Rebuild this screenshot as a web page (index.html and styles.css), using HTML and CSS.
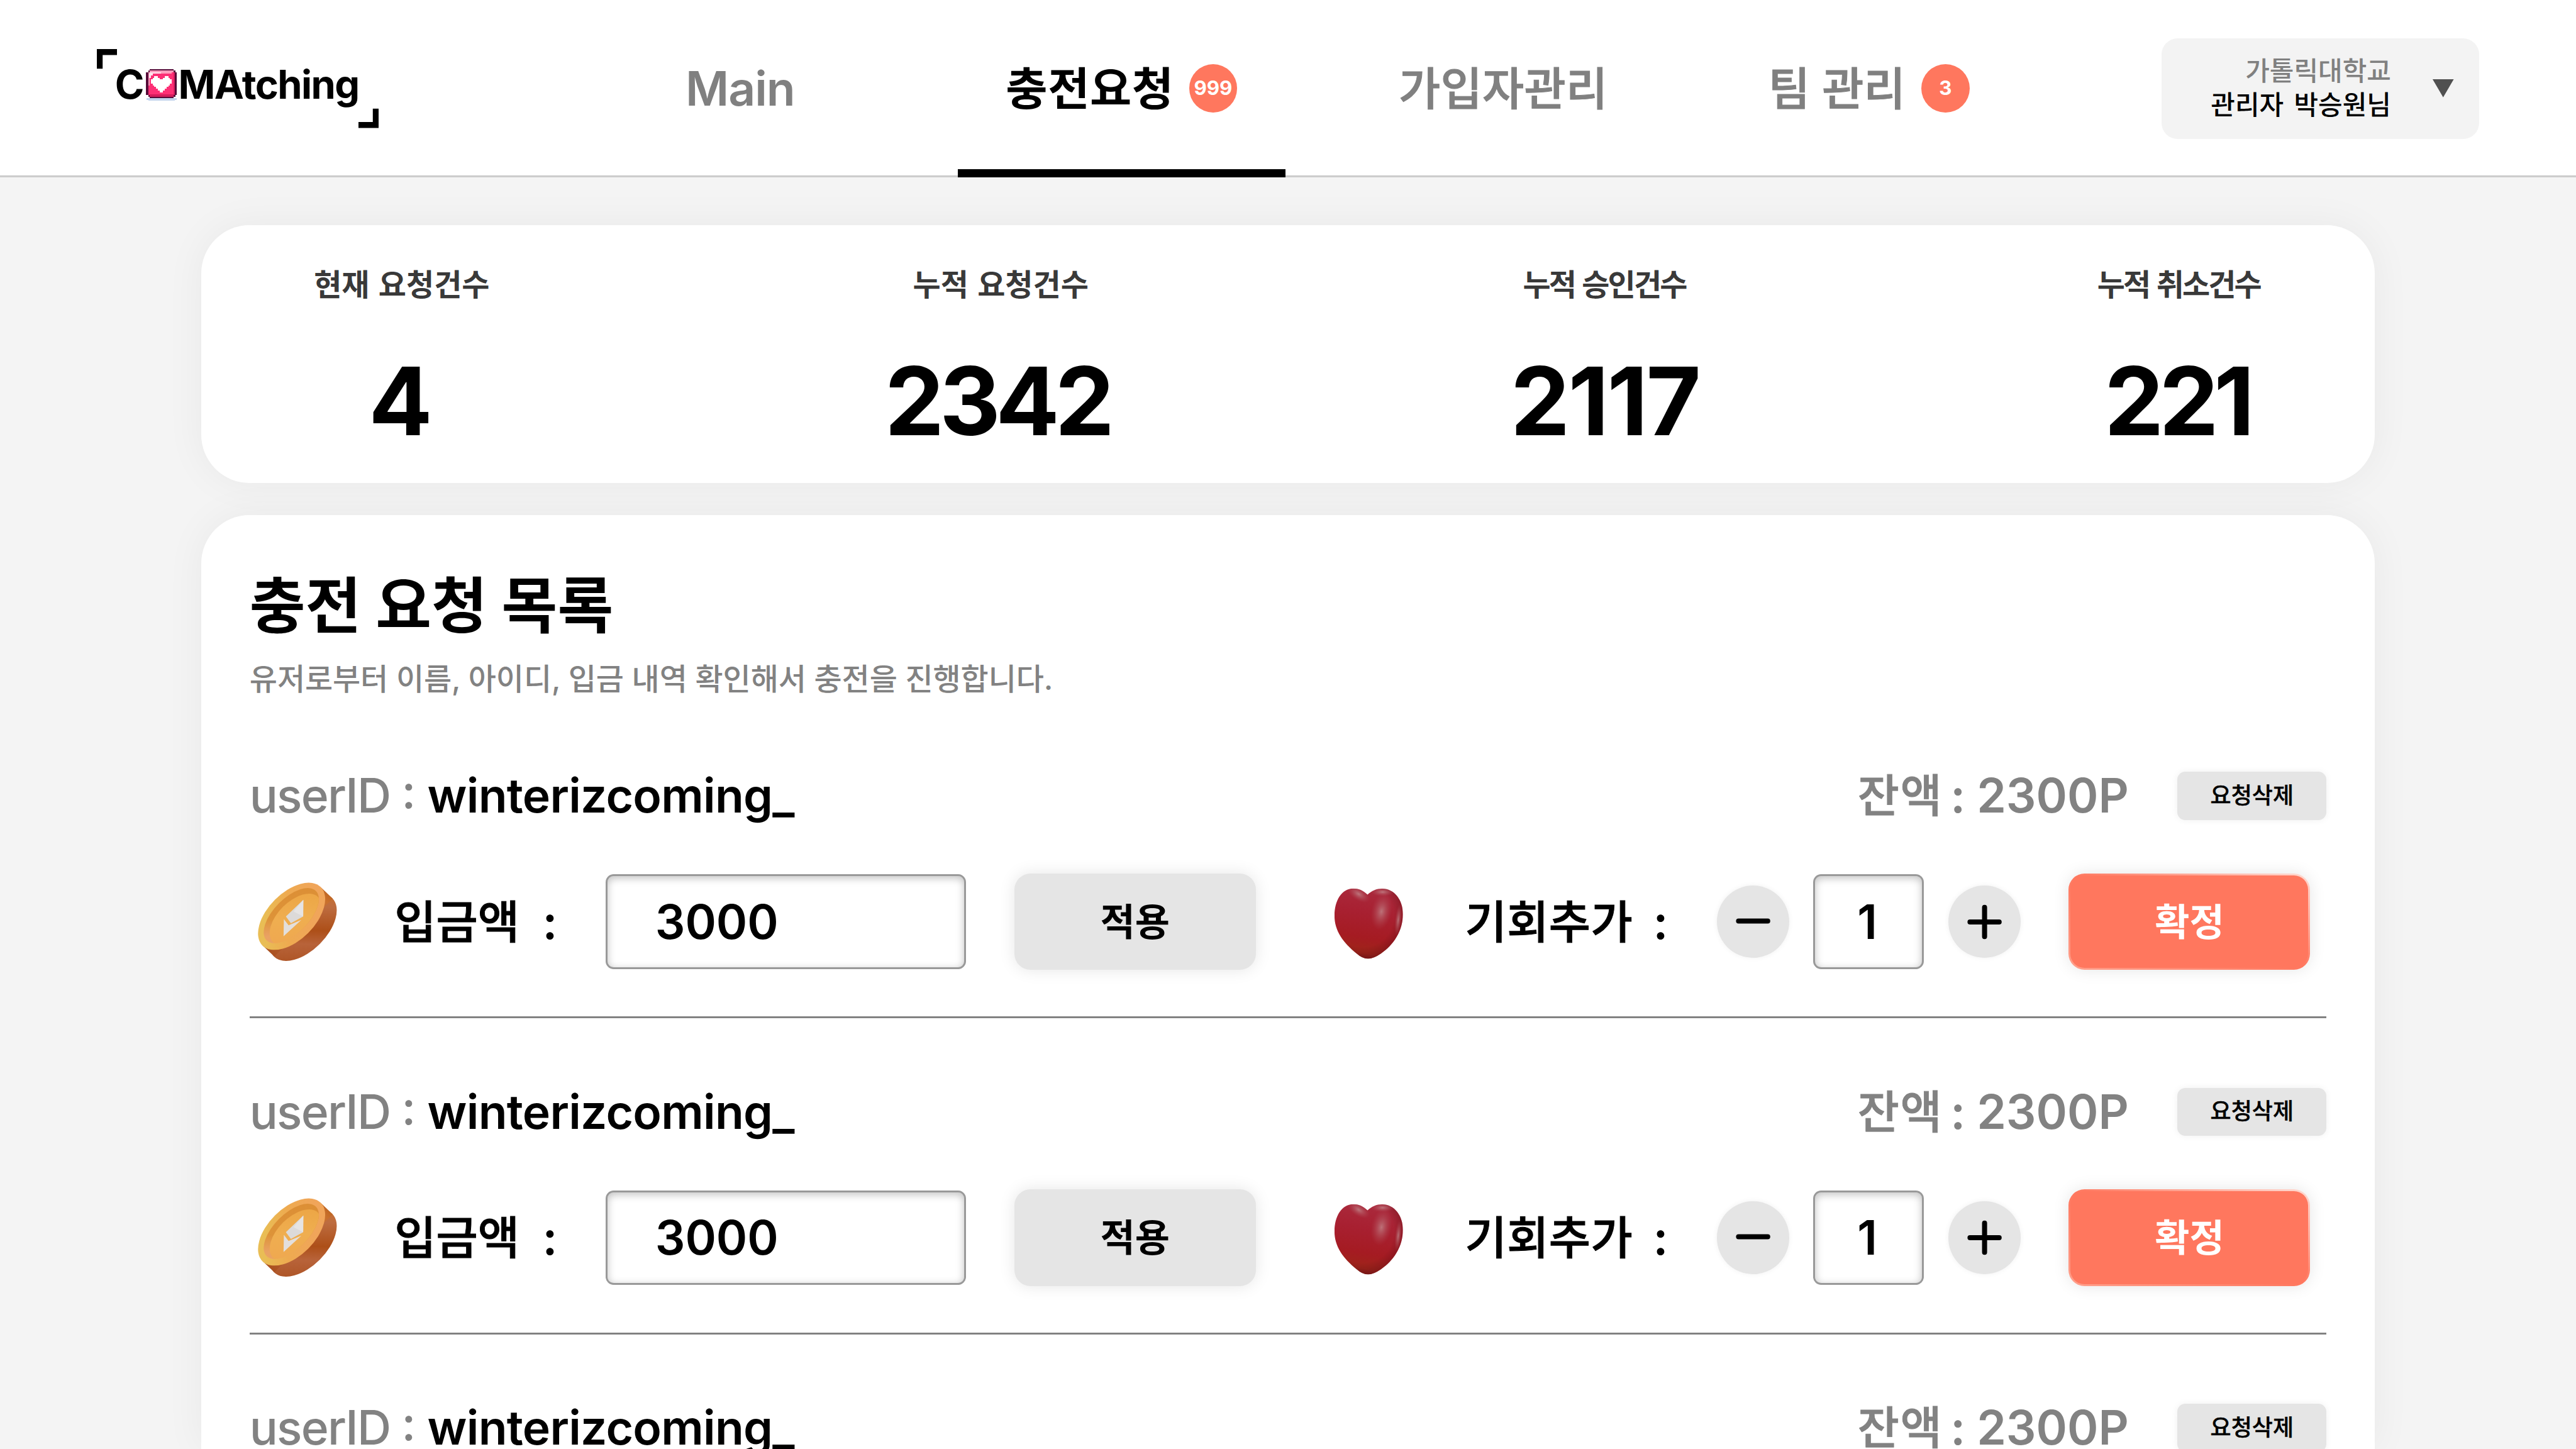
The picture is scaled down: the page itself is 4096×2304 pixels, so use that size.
FILE: index.html
```
<!DOCTYPE html>
<html lang="ko">
<head>
<meta charset="utf-8">
<title>COMAtching 관리자</title>
<link rel="stylesheet" href="styles.css">
</head>
<body>
<svg class="sprites" aria-hidden="true">
  <defs>
    <linearGradient id="coin-side" gradientUnits="userSpaceOnUse" x1="140" y1="500" x2="520" y2="130">
      <stop offset="0" stop-color="#a94f1d"/><stop offset=".3" stop-color="#b8633a"/><stop offset=".45" stop-color="#ad4f18"/>
      <stop offset=".72" stop-color="#bd6c40"/><stop offset=".88" stop-color="#c9702c"/><stop offset="1" stop-color="#b8601f"/>
    </linearGradient>
    <linearGradient id="coin-rim" gradientUnits="userSpaceOnUse" x1="150" y1="160" x2="370" y2="370">
      <stop offset="0" stop-color="#e9bd55"/><stop offset=".45" stop-color="#eeaa50"/><stop offset="1" stop-color="#f0a55a"/>
    </linearGradient>
    <linearGradient id="coin-wall" gradientUnits="userSpaceOnUse" x1="120" y1="400" x2="400" y2="110">
      <stop offset="0" stop-color="#eca35f"/><stop offset=".2" stop-color="#e9a263"/><stop offset=".45" stop-color="#dd9338"/><stop offset="1" stop-color="#dc8e35"/>
    </linearGradient>
    <linearGradient id="coin-floor" gradientUnits="userSpaceOnUse" x1="170" y1="400" x2="400" y2="150">
      <stop offset="0" stop-color="#efa750"/><stop offset=".5" stop-color="#efae50"/><stop offset="1" stop-color="#eca544"/>
    </linearGradient>
    <clipPath id="coin-recess"><ellipse cx="266" cy="263" rx="208" ry="104" transform="rotate(-45 266 263)"/></clipPath>
    <linearGradient id="heart-body" gradientUnits="userSpaceOnUse" x1="300" y1="77" x2="235" y2="496">
      <stop offset="0" stop-color="#aa2a3d"/><stop offset=".35" stop-color="#a82031"/><stop offset=".7" stop-color="#a51b22"/><stop offset=".92" stop-color="#9e2519"/><stop offset="1" stop-color="#7c1c14"/>
    </linearGradient>
    <radialGradient id="heart-edge" gradientUnits="userSpaceOnUse" cx="235" cy="240" r="260">
      <stop offset=".72" stop-color="#701018" stop-opacity="0"/><stop offset="1" stop-color="#701018" stop-opacity=".6"/>
    </radialGradient>
    <radialGradient id="heart-glow">
      <stop offset="0" stop-color="#c9a3a3" stop-opacity=".62"/><stop offset="1" stop-color="#b05560" stop-opacity="0"/>
    </radialGradient>
    <clipPath id="heart-clip"><path d="M265 114C240 88 210 77 180 77C110 77 68 150 68 240C68 330 120 400 200 465Q235 496 268 496Q300 496 345 465C420 415 476 330 476 230C476 145 425 78 352 78C318 78 290 90 265 114Z"/></clipPath>
  </defs>
  <symbol id="coin" viewBox="18 12 576 576">
    <g fill="url(#coin-side)">
      <ellipse cx="337" cy="333" rx="246" ry="140" transform="rotate(-45 337 333)"/>
      <path d="M444 95L513 161L165 507L96 441Z"/>
    </g>
    <ellipse cx="268" cy="267" rx="246" ry="140" transform="rotate(-45 268 267)" fill="url(#coin-rim)"/>
    <ellipse cx="266" cy="263" rx="208" ry="104" transform="rotate(-45 266 263)" fill="url(#coin-wall)"/>
    <g clip-path="url(#coin-recess)">
      <ellipse cx="291" cy="286" rx="190" ry="106" transform="rotate(-45 291 286)" fill="url(#coin-floor)"/>
    </g>
    <path d="M338 169L337 268L264 308L234 268Z" fill="#dcdad9"/>
    <path d="M338 169L337 268L280 238Z" fill="#e6e4e3"/>
    <path d="M222 284L250 320L326 289L220 386Z" fill="#e3dfdc"/>
  </symbol>
  <symbol id="heart" viewBox="-18 -12 576 576">
    <g clip-path="url(#heart-clip)">
      <rect x="60" y="70" width="425" height="430" fill="url(#heart-body)"/>
      <rect x="60" y="70" width="425" height="430" fill="url(#heart-edge)"/>
      <ellipse cx="212" cy="110" rx="75" ry="38" transform="rotate(32 212 110)" fill="url(#heart-glow)"/>
      <ellipse cx="355" cy="98" rx="70" ry="26" fill="url(#heart-glow)"/>
      <ellipse cx="348" cy="215" rx="62" ry="110" transform="rotate(10 348 215)" fill="url(#heart-glow)"/>
      <ellipse cx="448" cy="265" rx="20" ry="95" transform="rotate(6 448 265)" fill="url(#heart-glow)"/>
    </g>
  </symbol>
</svg>

<header class="topbar">
  <svg class="logo" viewBox="0 0 560 157" role="img" aria-label="COMAtching">
    <path d="M0 0H40V12H11.500V39H0ZM560 157H520V145H548.500V118.500H560Z"/>
    <text class="logo-text" x="36" y="98.300">C</text>
    <g transform="translate(-32 -38) scale(.40816 .33333)" shape-rendering="crispEdges">
      <path fill="#c3d5ec" d="M320 408H467V417H457V423H328V417H320Z"/>
      <path fill="#560a38" d="M337 233H451V242H460V251H467V389H460V399H451V408H337V399H328V389H318V251H328V242H337Z"/>
      <path fill="#fd2f75" d="M337 242H451V251H458V389H451V399H337V389H328V251H337Z"/>
      <path fill="#d51c5c" d="M337 385H451V251H458V389H451V399H337Z"/>
      <path fill="#ff9dbd" d="M337 242H451V251H443V260H350V270H337V330H328V251H337Z"/>
      <path fill="#ffe3ec" d="M337 251H390V260H350V270H343V285H333V260H337Z"/>
      <path fill="#fff" d="M358 276H374V285H384V294H400V285H410V276H426V285H434V294H442V320H434V330H426V340H418V350H410V362H400V374H386V362H376V350H366V340H358V330H350V320H343V294H350V285H358Z"/>
    </g>
    <text class="logo-text" x="162" y="98.300">MAtching</text>
  </svg>

  <nav class="tabs">
    <a class="tab tab-main latin">Main</a>
    <a class="tab tab-active">충전요청<span class="badge">999</span></a>
    <a class="tab tab-members">가입자관리</a>
    <a class="tab tab-team">팀 관리<span class="badge">3</span></a>
  </nav>

  <div class="profile">
    <div class="profile-text">
      <span class="profile-school">가톨릭대학교</span>
      <span class="profile-name">관리자 박승원님</span>
    </div>
    <svg class="caret" viewBox="0 0 42 36"><path d="M0 0H42L21 36Z"/></svg>
  </div>
</header>

<main class="page">
  <section class="card stats">
    <div class="stat"><span class="stat-label">현재 요청건수</span><span class="stat-value">4</span></div>
    <div class="stat"><span class="stat-label">누적 요청건수</span><span class="stat-value">2342</span></div>
    <div class="stat"><span class="stat-label tight">누적 승인건수</span><span class="stat-value ones">2117</span></div>
    <div class="stat"><span class="stat-label tight">누적 취소건수</span><span class="stat-value">221</span></div>
  </section>

  <section class="card requests">
    <h1 class="title">충전 요청 목록</h1>
    <p class="subtitle">유저로부터 이름, 아이디, 입금 내역 확인해서 충전을 진행합니다.</p>

    <article class="request">
      <div class="user-line">
        <span class="user-key">userID <span class="raised">:</span></span><span class="user-name">winterizcoming_</span>
        <span class="balance-key">잔액</span><span class="balance-colon">:</span><span class="balance">2300P</span>
        <button class="btn btn-delete">요청삭제</button>
      </div>
      <div class="controls">
        <svg class="icon"><use href="#coin"/></svg>
        <div class="field-label deposit"><span>입금액</span><span class="colon">:</span></div>
        <div class="input amount">3000</div>
        <button class="btn btn-apply">적용</button>
        <svg class="icon icon-heart"><use href="#heart"/></svg>
        <div class="field-label chance"><span>기회추가</span><span class="colon">:</span></div>
        <div class="stepper">
          <button class="round"><svg viewBox="0 0 144 144"><path d="M43 70.500H101"/></svg></button>
          <div class="input count">1</div>
          <button class="round"><svg viewBox="0 0 144 144"><path d="M43 72.500H101M72 43.500V101.500"/></svg></button>
        </div>
        <button class="btn btn-confirm">확정</button>
      </div>
    </article>

    <article class="request">
      <div class="user-line">
        <span class="user-key">userID <span class="raised">:</span></span><span class="user-name">winterizcoming_</span>
        <span class="balance-key">잔액</span><span class="balance-colon">:</span><span class="balance">2300P</span>
        <button class="btn btn-delete">요청삭제</button>
      </div>
      <div class="controls">
        <svg class="icon"><use href="#coin"/></svg>
        <div class="field-label deposit"><span>입금액</span><span class="colon">:</span></div>
        <div class="input amount">3000</div>
        <button class="btn btn-apply">적용</button>
        <svg class="icon icon-heart"><use href="#heart"/></svg>
        <div class="field-label chance"><span>기회추가</span><span class="colon">:</span></div>
        <div class="stepper">
          <button class="round"><svg viewBox="0 0 144 144"><path d="M43 70.500H101"/></svg></button>
          <div class="input count">1</div>
          <button class="round"><svg viewBox="0 0 144 144"><path d="M43 72.500H101M72 43.500V101.500"/></svg></button>
        </div>
        <button class="btn btn-confirm">확정</button>
      </div>
    </article>

    <article class="request">
      <div class="user-line">
        <span class="user-key">userID <span class="raised">:</span></span><span class="user-name">winterizcoming_</span>
        <span class="balance-key">잔액</span><span class="balance-colon">:</span><span class="balance">2300P</span>
        <button class="btn btn-delete">요청삭제</button>
      </div>
    </article>
  </section>
</main>
</body>
</html>
```
FILE: styles.css
```
* { box-sizing: border-box; }

body {
  display: flex;
  flex-direction: column;
  margin: 0;
  height: 2304px;
  overflow: hidden;
  background: #f4f4f4;
  color: #000;
  font-family: Inter, "Noto Sans CJK KR", sans-serif;
  line-height: 1.2;
}

button {
  margin: 0;
  padding: 0;
  border: 0;
  font: inherit;
  color: inherit;
}

.sprites { position: absolute; width: 0; height: 0; }

/* Top bar */
.topbar {
  display: flex;
  flex: none;
  align-items: center;
  height: 281.6px;
  padding: 0 153.6px;
  background: #fff;
  box-shadow: inset 0 -3.2px #cdcdcd;
}
.logo { width: 448px; height: 125.6px; overflow: visible; }
.logo-text { font-size: 79px; font-weight: 700; letter-spacing: -2px; }

.tabs {
  display: flex;
  align-self: stretch;
  gap: 103px;
  margin-left: 411.6px;
}
.tab {
  position: relative;
  display: flex;
  align-items: center;
  justify-content: space-between;
  padding: 0 76.8px;
  font-size: 72px;
  font-weight: 500;
  -webkit-text-stroke: 1px currentColor;
  color: #808080;
  white-space: nowrap;
}
.latin { font-size: 75px; font-weight: 600; letter-spacing: -1px; -webkit-text-stroke: 0; }
.tab-main { margin-right: 79px; }
.tab-members { width: 484.8px; letter-spacing: .3px; }
.tab-team { width: 473.6px; }
.tab-active {
  width: 521.6px;
  color: #000;
  font-weight: 700;
  letter-spacing: .6px;
  -webkit-text-stroke: 0;
}
.tab-active::after {
  content: "";
  position: absolute;
  left: 0;
  right: 0;
  bottom: 0;
  height: 12.8px;
  background: #000;
}
.badge {
  display: grid;
  place-items: center;
  width: 76.8px;
  height: 76.8px;
  border-radius: 50%;
  background: #ff775e;
  color: #fff;
  font-size: 31.3px;
  font-weight: 650;
  letter-spacing: 0;
  -webkit-text-stroke: 0;
}

.profile {
  display: flex;
  align-items: center;
  justify-content: flex-end;
  gap: 66px;
  width: 505.6px;
  height: 160px;
  margin-left: auto;
  padding: 0 40.8px 0 0;
  border-radius: 25.6px;
  background: #f3f3f3;
}
.profile-text {
  display: flex;
  flex-direction: column;
  align-items: flex-end;
  padding-bottom: 1px;
  font-size: 42px;
  font-weight: 500;
  line-height: 54.8px;
}
.profile-school { color: #808080; }
.profile-name { word-spacing: 5px; }
.caret { width: 33.6px; height: 28.8px; fill: #505050; }

/* Cards */
.page {
  display: flex;
  flex: 1;
  flex-direction: column;
  gap: 51.2px;
  min-height: 0;
  padding: 76.8px 320px 0;
}
.card {
  border-radius: 76.8px;
  background: #fff;
  box-shadow: 0 0 64px rgba(0, 0, 0, .05);
}

.stats {
  display: flex;
  flex: none;
  justify-content: space-between;
  height: 409.6px;
  padding: 64px 179.2px 0;
}
.stat {
  display: flex;
  flex-direction: column;
  align-items: center;
  gap: 62.5px;
}
.stat-label {
  color: #393939;
  font-size: 48px;
  font-weight: 700;
  line-height: 61px;
  word-spacing: 3px;
}
.stat-label.tight { margin: 0 3px 0 -3px; letter-spacing: -2.9px; }
.stat-value {
  margin: 0 5.5px 0 -5.5px;
  font-size: 150.2px;
  font-weight: 700;
  line-height: 182px;
  letter-spacing: -7.5px;
}
.stat-value.ones { margin: 0 2px 0 -2px; letter-spacing: -2.8px; }

/* Request list */
.requests {
  flex: 1;
  min-height: 0;
  padding: 83px 76.8px 0;
  border-radius: 76.8px 76.8px 0 0;
}
.title {
  margin: 0;
  font-size: 96.5px;
  font-weight: 700;
  line-height: 122.9px;
}
.subtitle {
  margin: 24.5px 0 7.2px;
  color: #828282;
  font-size: 48px;
  font-weight: 500;
  line-height: 60px;
  letter-spacing: -.08px;
}
.request {
  height: 502.4px;
  padding-top: 110.4px;
  border-bottom: 3px solid #828282;
}
.user-line {
  display: flex;
  align-items: center;
  height: 76.8px;
  font-size: 75px;
  line-height: 76.8px;
}
.user-key {
  width: 282.8px;
  color: #828282;
  font-weight: 500;
  letter-spacing: -1.8px;
  white-space: nowrap;
}
.raised { position: relative; top: -7px; }
.user-name { font-weight: 600; letter-spacing: -.75px; }
.balance-key {
  margin: 0 12px 0 auto;
  color: #828282;
  font-size: 72px;
  font-weight: 500;
  letter-spacing: 1.5px;
  -webkit-text-stroke: .8px currentColor;
}
.balance-colon { margin-right: 18px; color: #828282; font-weight: 600; }
.balance { margin-right: 77.5px; color: #828282; font-weight: 600; }

.btn {
  display: grid;
  place-items: center;
  background: #e5e5e5;
  font-weight: 700;
  line-height: 1.2;
}
.btn-delete {
  width: 236.8px;
  height: 76.8px;
  border-radius: 12.8px;
  box-shadow: 0 0 12px rgba(0, 0, 0, .06);
  font-size: 36px;
  font-weight: 500;
  -webkit-text-stroke: .4px currentColor;
}

.controls {
  display: flex;
  align-items: center;
  height: 153.6px;
  margin-top: 84.8px;
}
.icon { width: 153.6px; height: 153.6px; margin-right: 76.8px; }
.icon-heart { margin-left: 102.4px; }
.field-label {
  display: flex;
  align-items: center;
  justify-content: space-between;
  margin-right: 76.8px;
  font-size: 72px;
  font-weight: 500;
  line-height: 90px;
  -webkit-text-stroke: 1px currentColor;
}
.colon { font-size: 75px; font-weight: 600; -webkit-text-stroke: 0; }
.deposit { width: 259.2px; }
.chance { width: 323.2px; letter-spacing: .4px; }
.input {
  display: flex;
  align-items: center;
  height: 150.4px;
  border: 3px solid #999;
  border-radius: 12.8px;
  box-shadow: inset 0 3.2px 12.8px rgba(0, 0, 0, .25);
  font-size: 75px;
  font-weight: 600;
}
.amount { width: 572.8px; margin-right: 76.8px; padding-left: 75.5px; }
.count { justify-content: center; width: 176px; padding-right: 4px; }
.btn-apply, .btn-confirm {
  width: 384px;
  height: 153.6px;
  border-radius: 25.6px;
  font-size: 60px;
}
.btn-apply { box-shadow: 0 0 25.6px rgba(0, 0, 0, .1); }
.btn-confirm {
  border: 3px solid transparent;
  background:
    linear-gradient(#ff775e, #ff775e) padding-box,
    linear-gradient(to top right, #ffa08c, #ff775e 50%, #ffdcd4) border-box;
  box-shadow: 0 0 25.6px rgba(0, 0, 0, .1);
  color: #fff;
}
.stepper {
  display: flex;
  align-items: center;
  gap: 38.4px;
  margin-right: 76.8px;
}
.round {
  width: 115.2px;
  height: 115.2px;
  border-radius: 50%;
  background: #e5e5e5;
  box-shadow: 0 0 8px rgba(0, 0, 0, .06);
}
.round svg { display: block; width: 100%; height: 100%; fill: none; stroke: #000; stroke-width: 10; stroke-linecap: round; }
```
